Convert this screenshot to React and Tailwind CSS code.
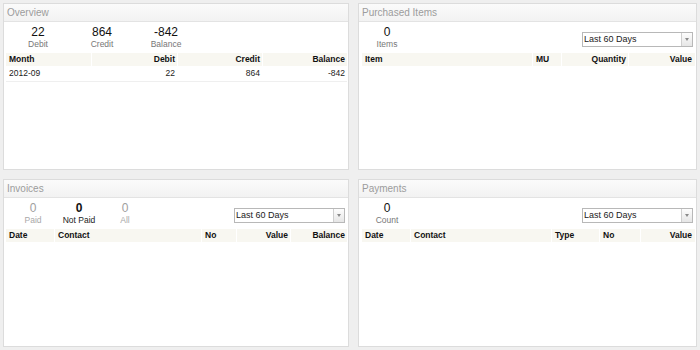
import React from 'react';

const font = { fontFamily: '"Liberation Sans", Arial, sans-serif' };

const Panel = ({ title, pad, children }) => (
  <section className="border border-[#dcdcdc] bg-white flex flex-col min-h-0">
    <div className="h-[18px] border-b border-[#e3e3e3] bg-gradient-to-b from-[#fbfbfb] to-[#f2f2f2] pl-[3px] text-[10px] leading-[17px] font-normal text-[#9c9c9c]">
      {title}
    </div>
    <div className={`flex-1 flex flex-col pt-[3px] ${pad}`}>{children}</div>
  </section>
);

const Stat = ({ value, label, w, tone = 'normal' }) => {
  const num =
    tone === 'muted'
      ? 'text-[#a0a0a0] font-normal'
      : tone === 'bold'
        ? 'text-[#111] font-bold'
        : 'text-[#111]';
  const lab = tone === 'muted' ? 'text-[#a8a8a8]' : tone === 'bold' ? 'text-[#222]' : 'text-[#777]';
  return (
    <div className={`${w} flex flex-col items-center`}>
      <span className={`text-[12px] leading-[14px] ${num}`}>{value}</span>
      <span className={`text-[8.5px] leading-[10px] ${lab}`}>{label}</span>
    </div>
  );
};

const RangeSelect = () => (
  <div className="self-end mb-[4px] mr-[2px] w-[111px] h-[15px] border border-[#b8b8b8] bg-white flex">
    <span className="flex-1 pl-[1px] text-[9px] leading-[13px] text-[#222]">Last 60 Days</span>
    <span className="w-[11px] border-l border-[#cfcfcf] bg-gradient-to-b from-[#fdfdfd] to-[#e6e6e6] flex items-center justify-center">
      <span className="w-0 h-0 border-l-[2.5px] border-r-[2.5px] border-t-[3px] border-l-transparent border-r-transparent border-t-[#8a8a8a]" />
    </span>
  </div>
);

const HeadRow = ({ cols, cells }) => (
  <div className={`grid ${cols} h-[13px] bg-[#f8f7f1] text-[8.5px] leading-[13px] font-bold text-[#111]`}>
    {cells.map((c, i) => (
      <span key={i} className={`${i ? 'border-l border-white' : ''} ${c.right ? 'text-right pr-[2px]' : 'pl-[3px]'}`}>
        {c.label}
      </span>
    ))}
  </div>
);

export default function App() {
  return (
    <div
      style={font}
      className="w-[700px] h-[350px] bg-[#efefef] grid grid-cols-[346px_339px] grid-rows-[167px_168px] gap-[9px] pl-[3px] pt-[3px]"
    >
      <Panel title="Overview" pad="pl-[2px] pr-[1px]">
        <div className="flex h-[26px]">
          <Stat value="22" label="Debit" w="w-[64px]" />
          <Stat value="864" label="Credit" w="w-[64px]" />
          <Stat value="-842" label="Balance" w="w-[64px]" />
        </div>
        <div className="mt-[2px]">
          <HeadRow
            cols="grid-cols-[85px_86px_85px_85px]"
            cells={[
              { label: 'Month' },
              { label: 'Debit', right: true },
              { label: 'Credit', right: true },
              { label: 'Balance', right: true },
            ]}
          />
          <div className="grid grid-cols-[85px_86px_85px_85px] h-[16px] border-b border-[#efefef] text-[8.5px] leading-[15px] text-[#222]">
            <span className="pl-[3px]">2012-09</span>
            <span className="text-right pr-[2px]">22</span>
            <span className="text-right pr-[2px]">864</span>
            <span className="text-right pr-[2px]">-842</span>
          </div>
        </div>
      </Panel>

      <Panel title="Purchased Items" pad="pl-[3px] pr-[1px]">
        <div className="flex h-[26px] justify-between">
          <Stat value="0" label="Items" w="w-[50px]" />
          <RangeSelect />
        </div>
        <div className="mt-[2px]">
          <HeadRow
            cols="grid-cols-[170px_29px_67px_66px]"
            cells={[
              { label: 'Item' },
              { label: 'MU' },
              { label: 'Quantity', right: true },
              { label: 'Value', right: true },
            ]}
          />
        </div>
      </Panel>

      <Panel title="Invoices" pad="pl-[2px] pr-[1px]">
        <div className="flex h-[26px] justify-between">
          <div className="flex pl-[4px]">
            <Stat value="0" label="Paid" w="w-[46px]" tone="muted" />
            <Stat value="0" label="Not Paid" w="w-[46px]" tone="bold" />
            <Stat value="0" label="All" w="w-[46px]" tone="muted" />
          </div>
          <RangeSelect />
        </div>
        <div className="mt-[2px]">
          <HeadRow
            cols="grid-cols-[48px_147px_35px_54px_57px]"
            cells={[
              { label: 'Date' },
              { label: 'Contact' },
              { label: 'No' },
              { label: 'Value', right: true },
              { label: 'Balance', right: true },
            ]}
          />
        </div>
      </Panel>

      <Panel title="Payments" pad="pl-[3px] pr-[1px]">
        <div className="flex h-[26px] justify-between">
          <Stat value="0" label="Count" w="w-[50px]" />
          <RangeSelect />
        </div>
        <div className="mt-[2px]">
          <HeadRow
            cols="grid-cols-[48px_141px_48px_41px_54px]"
            cells={[
              { label: 'Date' },
              { label: 'Contact' },
              { label: 'Type' },
              { label: 'No' },
              { label: 'Value', right: true },
            ]}
          />
        </div>
      </Panel>
    </div>
  );
}
